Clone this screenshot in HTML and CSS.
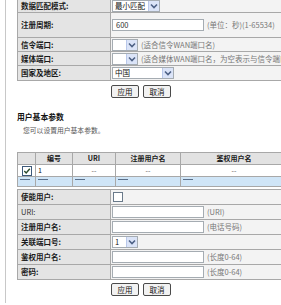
FILE: index.html
```html
<!DOCTYPE html>
<html>
<head>
<meta charset="utf-8">
<link rel="stylesheet" href="styles.css">
</head>
<body>
<div class="frame">
  <table class="form t1">
    <colgroup><col class="c1"><col></colgroup>
    <tr class="h13"><th>数据匹配模式:</th><td><span class="sel w48"><span class="st">最小匹配</span><i class="arr"><svg width="8" height="6" viewBox="0 0 8 6"><path d="M1 1.5L4 4.5L7 1.5" fill="none" stroke="#4d6185" stroke-width="1.6"/></svg></i></span></td></tr>
    <tr class="h24"><th>注册周期:</th><td><span class="inp">600</span><span class="hint">(单位：秒)(1-65534)</span></td></tr>
    <tr class="h13"><th>信令端口:</th><td><span class="sel w26"><i class="arr"><svg width="8" height="6" viewBox="0 0 8 6"><path d="M1 1.5L4 4.5L7 1.5" fill="none" stroke="#4d6185" stroke-width="1.6"/></svg></i></span><span class="hint">(适合信令WAN端口名)</span></td></tr>
    <tr class="h13"><th>媒体端口:</th><td><span class="sel w26"><i class="arr"><svg width="8" height="6" viewBox="0 0 8 6"><path d="M1 1.5L4 4.5L7 1.5" fill="none" stroke="#4d6185" stroke-width="1.6"/></svg></i></span><span class="hint">(适合媒体WAN端口名，为空表示与信令端口名相同)</span></td></tr>
    <tr class="h14"><th>国家及地区:</th><td><span class="sel w62"><span class="st">中国</span><i class="arr"><svg width="8" height="6" viewBox="0 0 8 6"><path d="M1 1.5L4 4.5L7 1.5" fill="none" stroke="#4d6185" stroke-width="1.6"/></svg></i></span></td></tr>
  </table>
  <div class="btns b1"><button class="btn">应用</button><button class="btn">取消</button></div>

  <h3 class="title">用户基本参数</h3>
  <p class="sub">您可以设置用户基本参数。</p>

  <table class="list">
    <colgroup><col class="l1"><col class="l2"><col class="l3"><col class="l4"><col class="l5"></colgroup>
    <tr class="head"><th></th><th>编号</th><th>URI</th><th>注册用户名</th><th>鉴权用户名</th></tr>
    <tr class="row"><td class="cc"><svg width="10" height="10" viewBox="0 0 10 10"><rect x="0.5" y="0.5" width="9" height="9" fill="#fff" stroke="#3d5a7a"/><path d="M2.3 5L4.2 7L7.8 2.8" fill="none" stroke="#2a4a2a" stroke-width="1.4"/></svg></td><td class="num">1</td><td class="ctr">--</td><td class="ctr">--</td><td class="ctr">--</td></tr>
    <tr class="blue"><td><span class="dash"></span></td><td><span class="dash"></span></td><td><span class="dash"></span></td><td><span class="dash"></span></td><td><span class="dash"></span></td></tr>
  </table>

  <table class="form t2">
    <colgroup><col class="c1"><col></colgroup>
    <tr class="h14"><th>使能用户:</th><td><span class="cb"></span></td></tr>
    <tr class="h14"><th class="plain">URI:</th><td><span class="inp"></span><span class="hint">(URI)</span></td></tr>
    <tr class="h14"><th>注册用户名:</th><td><span class="inp"></span><span class="hint">(电话号码)</span></td></tr>
    <tr class="h14"><th>关联端口号:</th><td><span class="sel w26"><span class="st">1</span><i class="arr"><svg width="8" height="6" viewBox="0 0 8 6"><path d="M1 1.5L4 4.5L7 1.5" fill="none" stroke="#4d6185" stroke-width="1.6"/></svg></i></span></td></tr>
    <tr class="h14"><th>鉴权用户名:</th><td><span class="inp"></span><span class="hint">(长度0-64)</span></td></tr>
    <tr class="h14"><th>密码:</th><td><span class="inp"></span><span class="hint">(长度0-64)</span></td></tr>
  </table>
  <div class="btns b2"><button class="btn">应用</button><button class="btn">取消</button></div>
</div>
</body>
</html>
```

FILE: styles.css
```css
html, body {
  margin: 0;
  padding: 0;
  background: #fff;
}
body {
  width: 281px;
  height: 305px;
  overflow: hidden;
  font-family: "Noto Sans CJK SC", "DejaVu Sans", sans-serif;
  font-size: 7.5px;
  color: #111;
}
.frame {
  margin-left: 5px;
  border-left: 1px solid #c8c8c8;
  padding-left: 11px;
  height: 305px;
}
table {
  border-collapse: collapse;
  table-layout: fixed;
}
.form {
  width: 330px;
}
.t1 {
  margin-top: -2px;
}
.t2 {
  margin-top: 2px;
}
.form col.c1 {
  width: 93px;
}
.form th {
  background: #e4e4e4;
  border: 1px solid #a8a8a8;
  text-align: left;
  font-weight: bold;
  padding: 0 0 0 3px;
  white-space: nowrap;
  line-height: 10px;
  font-size: 7.5px;
  color: #1a1a1a;
}
.form th.plain {
  font-weight: normal;
  color: #333;
}
.form td {
  background: #f3f3f3;
  border: 1px solid #a8a8a8;
  padding: 0 0 0 1px;
  white-space: nowrap;
  overflow: hidden;
  line-height: 10px;
}
.h13 th, .h13 td { height: 13px; }
.h14 th, .h14 td { height: 14px; }
.h24 th, .h24 td { height: 24px; }

.sel {
  display: inline-flex;
  align-items: center;
  box-sizing: border-box;
  height: 12px;
  border: 1px solid #a5acb2;
  background: #fff;
  vertical-align: middle;
  font-size: 7.5px;
  line-height: 10px;
}
.sel .st {
  padding-left: 2px;
}
.w26 { width: 26px; }
.w48 { width: 48px; }
.w62 { width: 62px; }
.arr {
  margin-left: auto;
  width: 10px;
  height: 10px;
  background: #dbe4f8;
  border-left: 1px solid #b9c8ea;
  display: flex;
  align-items: center;
  justify-content: center;
}
.inp {
  display: inline-block;
  box-sizing: border-box;
  width: 92px;
  height: 12px;
  border: 1px solid #a5acb2;
  background: #fff;
  vertical-align: middle;
  font-size: 7.5px;
  line-height: 10px;
  padding-left: 3px;
  color: #333;
}
.hint {
  font-size: 7.5px;
  color: #777;
  margin-left: 3px;
  vertical-align: middle;
}
.cb {
  display: inline-block;
  width: 8px;
  height: 8px;
  border: 1px solid #6a7a8a;
  background: #fff;
  vertical-align: middle;
  margin-left: 1px;
}

.btns {
  display: flex;
  gap: 4px;
  padding-left: 94px;
}
.b1 { margin-top: 4px; }
.b2 { margin-top: 3px; }
.btn {
  box-sizing: border-box;
  width: 28px;
  height: 13px;
  padding: 0;
  margin: 0;
  border: 1px solid #4a4a4a;
  border-radius: 2px;
  background: #f2f2f2;
  font-family: "Noto Sans CJK SC", sans-serif;
  font-size: 7.5px;
  line-height: 11px;
  color: #111;
}

.title {
  margin: 12px 0 0 0;
  font-size: 7.8px;
  font-weight: bold;
  line-height: 14px;
}
.sub {
  margin: 0 0 0 6px;
  font-size: 6.8px;
  line-height: 12px;
  color: #555;
}

.list {
  width: 270px;
  margin-top: 16px;
}
.list col.l1 { width: 18px; }
.list col.l2 { width: 37px; }
.list col.l3 { width: 43px; }
.list col.l4 { width: 65px; }
.list col.l5 { width: 107px; }
.list th {
  background: #e2e2e2;
  border: 1px solid #a8a8a8;
  height: 11px;
  padding: 0;
  font-size: 7px;
  line-height: 11px;
  font-weight: bold;
  color: #1a1a1a;
}
.list td {
  border: 1px solid #a8a8a8;
  height: 11px;
  padding: 0;
  font-size: 7px;
  line-height: 11px;
}
.list .row td {
  background: #fff;
}
.list td.cc {
  text-align: center;
  line-height: 0;
}
.list td.num {
  padding-left: 2px;
}
.list td.ctr {
  text-align: center;
  color: #555;
}
.list .blue td {
  background: #cfe5f7;
  height: 9px;
  vertical-align: top;
  padding-left: 2px;
  line-height: 0;
}
.dash {
  display: inline-block;
  width: 10px;
  height: 1px;
  margin-top: 2px;
  background: #5a6f8a;
}
```
